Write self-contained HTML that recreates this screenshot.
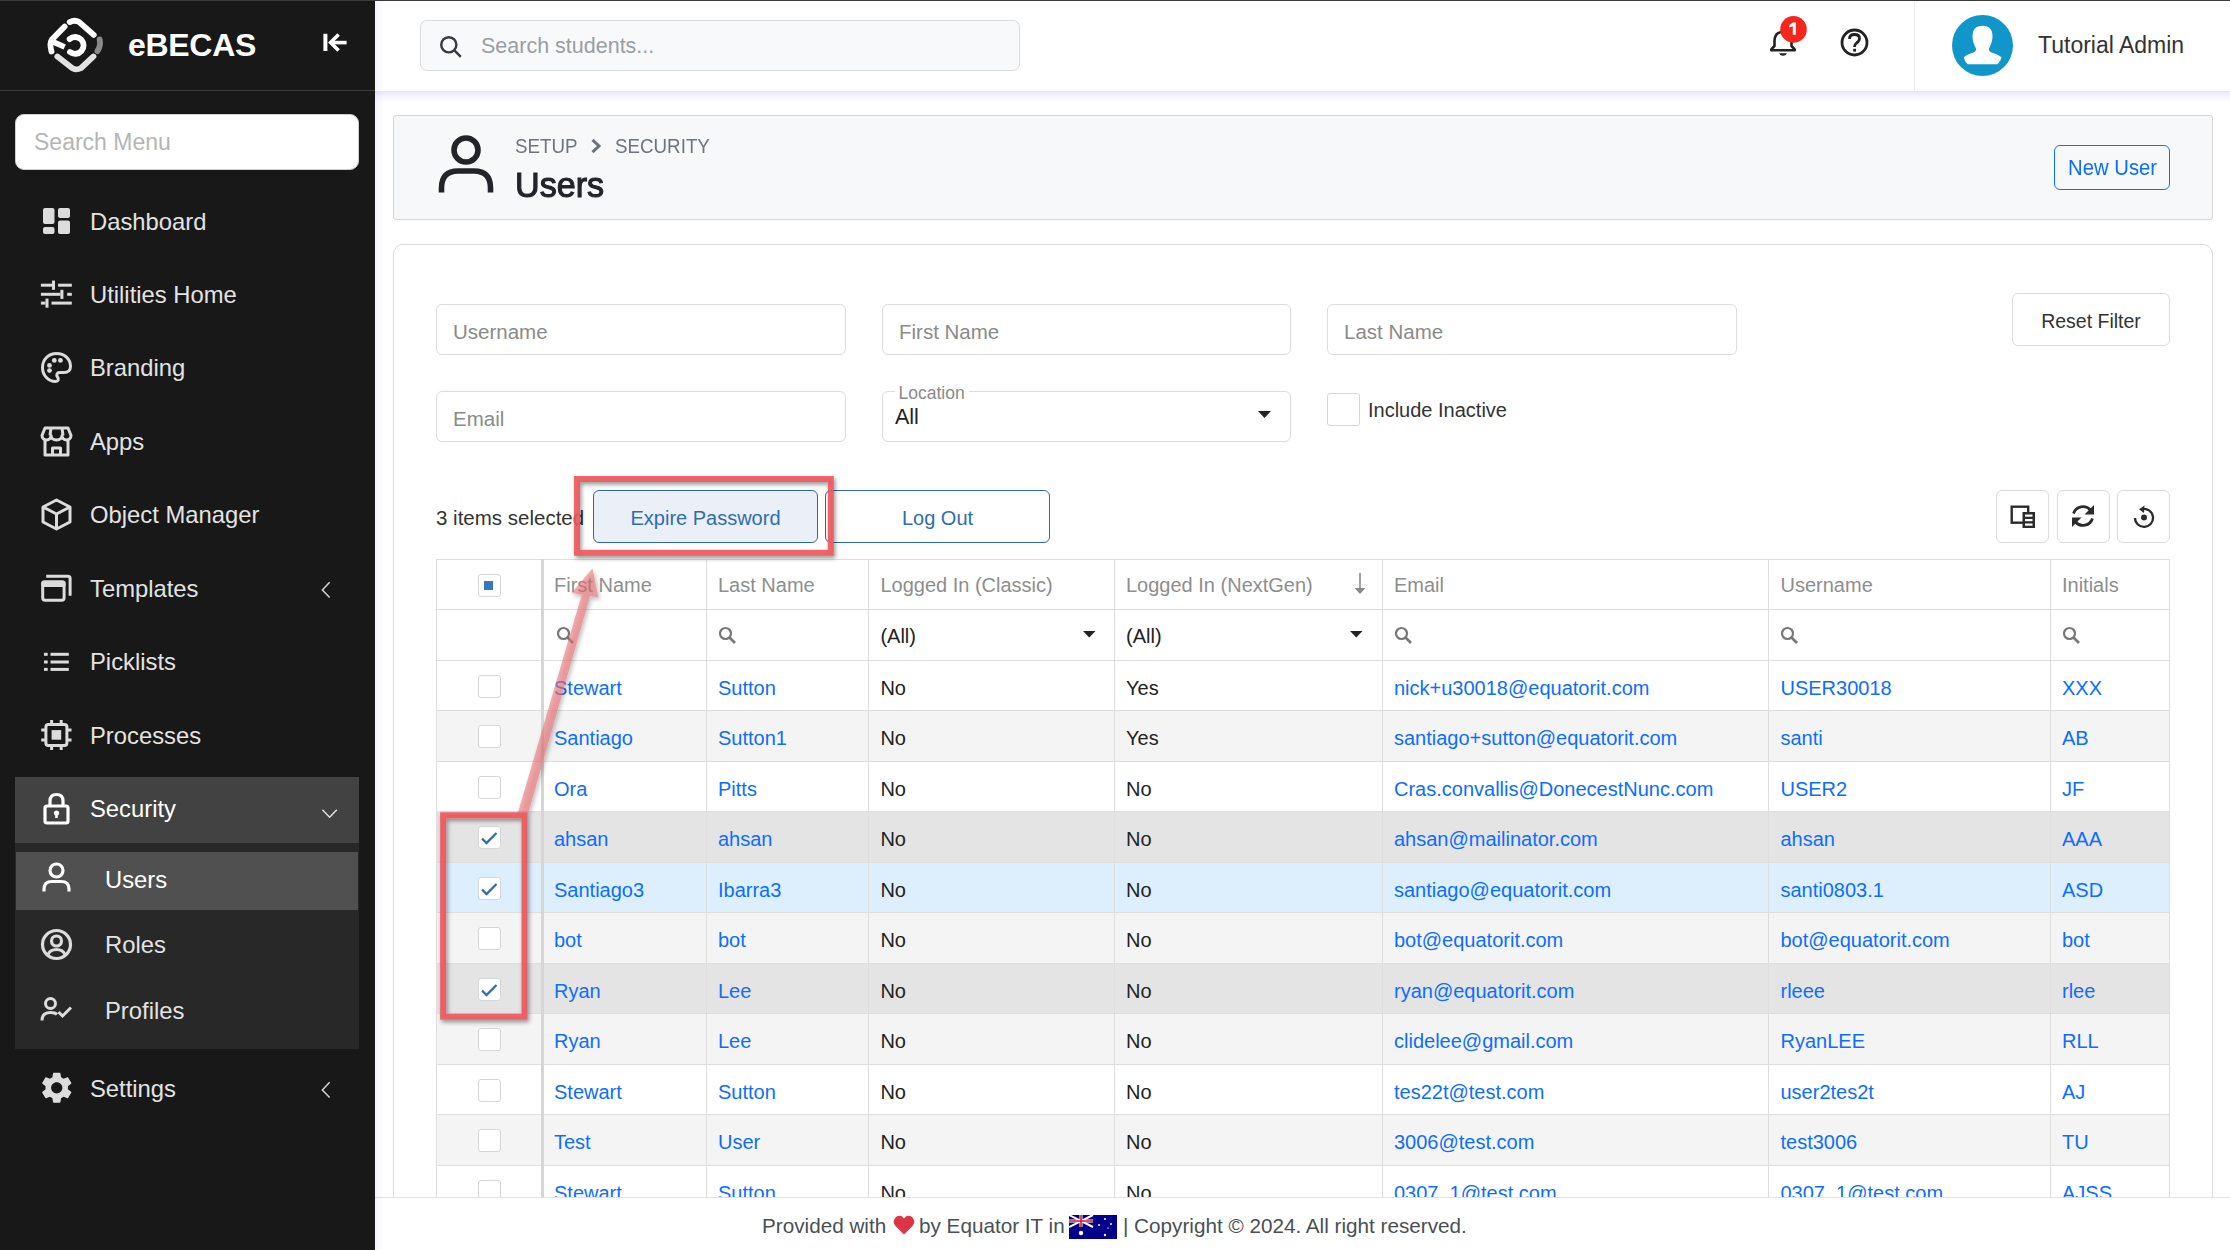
<!DOCTYPE html>
<html><head><meta charset="utf-8">
<style>
*{box-sizing:border-box;margin:0;padding:0}
html,body{width:2230px;height:1250px;overflow:hidden;background:#fff;font-family:"Liberation Sans",sans-serif}
.a{position:absolute}
#topline{left:0;top:0;width:2230px;height:1px;background:#3a3a3a;z-index:50}
#sb{left:0;top:0;width:375px;height:1250px;background:#181818}
#sb .sep{left:0;top:90px;width:375px;height:1px;background:#3c3c3c}
#sb .brand{left:128px;top:24px;font-size:32px;font-weight:bold;color:#fff;letter-spacing:-0.3px;line-height:42px}
#sb .smenu{left:15px;top:114px;width:344px;height:56px;background:#fff;border:1px solid #cfcfcf;border-radius:9px;color:#b5b5b5;font-size:23px;line-height:54px;padding-left:18px}
.mi{left:0;width:375px;height:40px;color:#e3e3e3;font-size:23.8px;line-height:40px}
.mi span{position:absolute;left:90px;top:1px}
.mi svg{position:absolute}
#sec{left:15px;top:777px;width:344px;height:66px;background:#424242}
#sub{left:15px;top:843px;width:344px;height:206px;background:#282828}
#subact{left:16px;top:852px;width:342px;height:58px;background:#505050}
#top{left:375px;top:1px;width:1855px;height:90px;background:#fff}
#topsh{left:375px;top:91px;width:1855px;height:12px;background:linear-gradient(rgba(105,95,225,0.17),rgba(105,95,225,0.06) 45%,rgba(105,95,225,0))}
#leftsh{left:375px;top:0;width:9px;height:1250px;background:linear-gradient(90deg,rgba(105,95,225,0.07),rgba(105,95,225,0))}
#search{left:420px;top:20px;width:600px;height:51px;background:#f8f9fa;border:1px solid #d9dadb;border-radius:7px;font-size:21.5px;color:#9a9ea3;line-height:50px;padding-left:60px}
#vdiv{left:1914px;top:1px;width:1px;height:90px;background:#ececec}
#admin{left:2038px;top:26px;font-size:23px;color:#333;line-height:38px}
#hdr{left:393px;top:115px;width:1820px;height:105px;background:#f7f8fa;border:1px solid #d6d6d6;border-radius:3px}
#crumb{left:514.5px;top:133.5px;font-size:20.3px;color:#6c757d;line-height:24px;transform:scaleX(0.925);transform-origin:0 0}
#title{left:514.5px;top:163px;font-size:35px;color:#212529;line-height:44px;-webkit-text-stroke:1.1px #212529;transform:scaleX(0.975);transform-origin:0 0}
#newuser{left:2054px;top:145px;width:116px;height:45px;border:1.5px solid #0d6efd;border-radius:6px;color:#0d6efd;font-size:20.5px;line-height:44px;text-align:center;background:transparent}
#card{left:393px;top:244px;width:1820px;height:1100px;border:1px solid #dcdcdc;border-radius:10px;background:#fff}
.inp{height:51px;border:1px solid #dcdcdc;border-radius:6px;background:#fff;font-size:20.5px;color:#8a8a8a;line-height:53px;padding-left:16px}
.btn{border:1px solid #dcdcdc;border-radius:6px;background:#fff;text-align:center}
#tbl{left:436px;top:559px;width:1734px}
.hline{height:1px;background:#dcdcdc}
.vline{width:1px;background:#dcdcdc}
.cell{font-size:20px;line-height:50px;white-space:nowrap}
.lnk{color:#0d6efd}
.blk{color:#222}
.cb{width:23px;height:23px;border:1px solid #d6d6d6;border-radius:3px;background:#fff}
#footer{left:375px;top:1197px;width:1855px;height:53px;background:#fff;border-top:1px solid #e2e2e2}
</style></head><body>
<div id="topline" class="a"></div>
<!-- SIDEBAR -->
<div id="sb" class="a">
  <div class="sep a"></div>
  <svg class="a" style="left:40px;top:10px" width="70" height="70" viewBox="0 0 1250 1250">
    <g fill="none" stroke-linecap="round" stroke-width="104">
      <path d="M530 215 Q620 170 700 215 L960 445" stroke="#fff"/>
      <path d="M440 295 L215 525 Q165 590 205 740" stroke="#fff"/>
      <path d="M225 565 L440 662" stroke="#fff" stroke-linecap="butt" stroke-width="100"/>
      <path d="M529.6 518.8 A150 150 0 1 1 535.7 750.2" stroke="#fff"/>
      <path d="M310 830 L580 1040 Q650 1080 730 1040 L955 830" stroke="#e2e2e2"/>
      <path d="M1065 525 Q1090 640 1025 735" stroke="#8a8a8a"/>
    </g>
  </svg>
  <div class="brand a">eBECAS</div>
  <svg class="a" style="left:322px;top:32px" width="26" height="22" viewBox="0 0 26 22"><rect x="1.4" y="1.8" width="4" height="17.2" fill="#fff"/><g stroke="#fff" stroke-width="3.6" fill="none"><path d="M8.5 10.6H24.6"/><path d="M16.6 2.6L8.6 10.6L16.6 18.6"/></g></svg>
  <div class="smenu a">Search Menu</div>
</div>
<div id="sec" class="a"></div>
<div id="sub" class="a"></div>
<div id="subact" class="a"></div>
<!-- menu items -->
<div class="mi a" style="top:201px"><svg style="left:42px;top:6px" width="29" height="28" viewBox="0 0 29 28"><g fill="#dcdcdc"><rect x="1" y="1" width="11.5" height="16" rx="2"/><rect x="16" y="1" width="12" height="10" rx="2"/><rect x="1" y="20" width="11.5" height="7" rx="2"/><rect x="16" y="13.5" width="12" height="13.5" rx="2"/></g></svg><span>Dashboard</span></div>
<div class="mi a" style="top:274px"><svg style="left:40px;top:6px" width="33" height="28" viewBox="0 0 33 28"><g fill="#dcdcdc"><rect x="0.9" y="3.7" width="11.1" height="3"/><rect x="18.1" y="3.7" width="13.7" height="3"/><rect x="12" y="0.6" width="3" height="9.2"/><rect x="0.9" y="12.8" width="19.5" height="3"/><rect x="27.2" y="12.8" width="4.6" height="3"/><rect x="20.4" y="9.8" width="3" height="9.1"/><rect x="0.9" y="21.6" width="4.6" height="3"/><rect x="11.5" y="21.6" width="20.3" height="3"/><rect x="5.5" y="18.6" width="3" height="9.1"/></g></svg><span>Utilities Home</span></div>
<div class="mi a" style="top:347px"><svg style="left:40px;top:4px" width="33" height="33" viewBox="0 0 33 33"><path d="M16.5 2.5C8.5 2.5 2.5 8.5 2.5 16.5C2.5 24.5 8.5 30.5 15.5 30.5C18.5 30.5 19 28 17.5 26C16 24 17 21.5 19.5 21.5H24C28 21.5 30.5 19 30.5 15.5C30.5 8 24.5 2.5 16.5 2.5Z" stroke="#dcdcdc" stroke-width="3" fill="none"/><g fill="#dcdcdc"><circle cx="9.5" cy="14.4" r="2.4"/><circle cx="14.3" cy="9.4" r="2.4"/><circle cx="20.4" cy="9.4" r="2.4"/><circle cx="9.5" cy="19.6" r="2.4"/></g></svg><span>Branding</span></div>
<div class="mi a" style="top:421px"><svg style="left:40px;top:5px" width="33" height="31" viewBox="0 0 33 31"><g stroke="#dcdcdc" stroke-width="3" fill="none" stroke-linejoin="round"><path d="M5 2H28L31 9.5C31 12 29 14 26.5 14C24 14 22 12 22 9.5C22 12 20 14 16.5 14C13 14 11 12 11 9.5C11 12 9 14 6.5 14C4 14 2 12 2 9.5Z"/><path d="M11 2L10 9.5M22 2L23 9.5"/><path d="M5 14V29H28V14"/><path d="M12.5 29V22H20.5V29"/></g></svg><span>Apps</span></div>
<div class="mi a" style="top:494px"><svg style="left:40px;top:4px" width="33" height="33" viewBox="0 0 33 33"><g stroke="#dcdcdc" stroke-width="3" fill="none" stroke-linejoin="round"><path d="M16.5 2L30 9V24L16.5 31L3 24V9Z"/><path d="M3 9L16.5 16L30 9M16.5 16V31"/></g></svg><span>Object Manager</span></div>
<div class="mi a" style="top:568px"><svg style="left:40px;top:5px" width="33" height="30" viewBox="0 0 33 30"><g stroke="#dcdcdc" stroke-width="3" fill="none" stroke-linejoin="round"><rect x="2.7" y="9.1" width="21.4" height="18.1" rx="2.5"/><path d="M6.2 3.3H28Q30.1 3.3 30.1 5.4V22.7"/></g><rect x="1.2" y="7.6" width="24.4" height="6.5" rx="2.5" fill="#dcdcdc"/></svg><span>Templates</span><svg style="left:318px;top:13px" width="14" height="18" viewBox="0 0 14 18"><path d="M11.6 1.3L4.4 9L11.6 16.4" stroke="#d4d4d4" stroke-width="1.5" fill="none"/></svg></div>
<div class="mi a" style="top:641px"><svg style="left:43px;top:9px" width="30" height="24" viewBox="0 0 30 24"><g fill="#dcdcdc"><rect x="1" y="2.8" width="3.7" height="3"/><rect x="1" y="10.5" width="3.7" height="3"/><rect x="1" y="17.9" width="3.7" height="3"/><rect x="7.5" y="2.8" width="18.3" height="3"/><rect x="7.5" y="10.5" width="18.3" height="3"/><rect x="7.5" y="17.9" width="18.3" height="3"/></g></svg><span>Picklists</span></div>
<div class="mi a" style="top:715px"><svg style="left:40px;top:4px" width="33" height="33" viewBox="0 0 33 33"><rect x="5.9" y="5.4" width="21" height="21" rx="2.5" stroke="#dcdcdc" stroke-width="3" fill="none"/><rect x="11.6" y="11.1" width="9.6" height="9.6" fill="#dcdcdc"/><g stroke="#dcdcdc" stroke-width="3"><path d="M11.6 1V5M21.2 1V5M11.6 27V31M21.2 27V31M1.2 11H5M1.2 21H5M27.5 11H31.5M27.5 21H31.5"/></g></svg><span>Processes</span></div>
<div class="mi a" style="top:788px;color:#fff"><svg style="left:42px;top:4px" width="29" height="33" viewBox="0 0 29 33"><g stroke="#fff" stroke-width="3.2" fill="none" stroke-linejoin="round"><rect x="3" y="14" width="23" height="17" rx="2"/><path d="M8 14V9Q8 2.5 14.5 2.5Q21 2.5 21 9V14"/></g><circle cx="14.5" cy="21" r="2.6" fill="#fff"/><rect x="13.2" y="21" width="2.6" height="5" fill="#fff"/></svg><span>Security</span><svg style="left:319px;top:16px" width="20" height="14" viewBox="0 0 20 14"><path d="M3.4 5.7L10.6 13.2L17.8 5.7" stroke="#e0e0e0" stroke-width="1.5" fill="none"/></svg></div>
<div class="mi a" style="top:859px;color:#fff"><svg style="left:42px;top:3px" width="29" height="31" viewBox="0 0 29 31"><g stroke="#fff" stroke-width="3.2" fill="none"><circle cx="14.5" cy="8.5" r="6.5"/><path d="M2 29.5V27Q2 19.5 10 19.5H19Q27 19.5 27 27V29.5"/></g></svg><span style="left:105px">Users</span></div>
<div class="mi a" style="top:924px"><svg style="left:40px;top:4px" width="33" height="33" viewBox="0 0 33 33"><g stroke="#dcdcdc" stroke-width="3.2" fill="none"><circle cx="16.5" cy="16.5" r="14"/><circle cx="16.5" cy="13" r="5"/><path d="M8 26.5Q10 21.5 16.5 21.5Q23 21.5 25 26.5"/></g></svg><span style="left:105px">Roles</span></div>
<div class="mi a" style="top:990px"><svg style="left:40px;top:7px" width="33" height="25" viewBox="0 0 33 25"><g stroke="#dcdcdc" stroke-width="3" fill="none"><circle cx="10.5" cy="6.5" r="5"/><path d="M2 23.5Q2 15.5 10.5 15.5Q15 15.5 17 17.5"/><path d="M18.5 15L22.5 19L31 10.5"/></g></svg><span style="left:105px">Profiles</span></div>
<div class="mi a" style="top:1068px"><svg style="left:37.75px;top:1.45px" width="37.5" height="37.5" viewBox="0 0 24 24"><path fill="#dcdcdc" d="M19.14 12.94c.04-.3.06-.61.06-.94 0-.32-.02-.64-.07-.94l2.03-1.58a.49.49 0 0 0 .12-.61l-1.92-3.32a.488.488 0 0 0-.59-.22l-2.39.96c-.5-.38-1.03-.7-1.62-.94l-.36-2.54a.484.484 0 0 0-.48-.41h-3.84c-.24 0-.43.17-.47.41l-.36 2.54c-.59.24-1.13.57-1.62.94l-2.39-.96c-.22-.08-.47 0-.59.22L2.74 8.87c-.12.21-.08.47.12.61l2.03 1.58c-.05.3-.09.63-.09.94s.02.64.07.94l-2.03 1.58a.49.49 0 0 0-.12.61l1.92 3.32c.12.22.37.29.59.22l2.39-.96c.5.38 1.03.7 1.62.94l.36 2.54c.05.24.24.41.48.41h3.84c.24 0 .44-.17.47-.41l.36-2.54c.59-.24 1.13-.56 1.62-.94l2.39.96c.22.08.47 0 .59-.22l1.92-3.32c.12-.22.07-.47-.12-.61l-2.01-1.58zM12 15.6c-1.98 0-3.6-1.62-3.6-3.6s1.62-3.6 3.6-3.6 3.6 1.62 3.6 3.6-1.62 3.6-3.6 3.6z"/></svg><span>Settings</span><svg style="left:318px;top:13px" width="14" height="18" viewBox="0 0 14 18"><path d="M11.6 1.3L4.4 9L11.6 16.4" stroke="#d4d4d4" stroke-width="1.5" fill="none"/></svg></div>

<!-- TOPBAR -->
<div id="top" class="a"></div><div id="topsh" class="a"></div>
<div id="search" class="a">Search students...</div>
<svg class="a" style="left:439px;top:35px" width="24" height="24" viewBox="0 0 24 24"><g stroke="#343a40" stroke-width="2.4" fill="none"><circle cx="9.8" cy="9.8" r="7.6"/><path d="M15.2 15.2L21.8 21.8"/></g></svg>
<svg class="a" style="left:1768px;top:14px" width="34" height="46" viewBox="0 0 34 46"><path d="M15 18Q6.5 18 6.5 27V32L3.3 35.3V36.3H26.7V35.3L23.5 32V27Q23.5 18 15 18Z" stroke="#222" stroke-width="2.6" fill="none" stroke-linejoin="round"/><path d="M11 39.3H19Q17.8 41.8 15 41.8Q12.2 41.8 11 39.3Z" fill="#222"/></svg>
<svg class="a" style="left:1780px;top:16px" width="27" height="27" viewBox="0 0 27 27"><circle cx="13.5" cy="13.4" r="13.3" fill="#f3271b"/><path d="M12.8 6.6H15.8V18.8H12.8V10.2L9.3 11.6V9.3Z" fill="#fff"/></svg>
<svg class="a" style="left:1839px;top:27px" width="31" height="31" viewBox="0 0 31 31"><circle cx="15.5" cy="15.5" r="12.5" stroke="#222" stroke-width="2.8" fill="none"/><path d="M10.5 12Q10.5 7.5 15.5 7.5Q20.5 7.5 20.5 11.5Q20.5 14 17.5 16Q15.5 17.5 15.5 20" stroke="#222" stroke-width="2.8" fill="none"/><rect x="14.2" y="21.8" width="2.8" height="2.8" fill="#222"/></svg>
<div id="vdiv" class="a"></div>
<svg class="a" style="left:1952px;top:15px" width="61" height="61" viewBox="0 0 61 61"><circle cx="30.5" cy="30.5" r="30.5" fill="#1096c8"/><path d="M30.5 10.7Q40.5 10.7 40.5 21.5Q40.5 27 37 33.5Q36.5 36 39.5 37.5Q47.5 40 49.5 42.5Q48.5 46.5 45.5 49.2H15.5Q12.5 46.5 11.8 42.5Q13.5 40 21.5 37.5Q24.5 36 24 33.5Q20.5 27 20.5 21.5Q20.5 10.7 30.5 10.7Z" fill="#fff"/></svg>
<div id="admin" class="a">Tutorial Admin</div>

<!-- HEADER CARD -->
<div id="hdr" class="a"></div>
<svg class="a" style="left:436px;top:133px" width="60" height="62" viewBox="0 0 60 62"><g stroke="#212529" stroke-width="5.6" fill="none"><circle cx="30" cy="17" r="12"/><path d="M5.5 59.5V55Q5.5 38 22 38H38Q54.5 38 54.5 55V59.5"/></g></svg>
<div id="crumb" class="a">SETUP</div><svg class="a" style="left:590px;top:138px" width="12" height="16" viewBox="0 0 12 16"><path d="M2.5 1.8L9 8L2.5 14.2" stroke="#6c757d" stroke-width="3" fill="none"/></svg><div class="a" style="left:614.5px;top:133.5px;font-size:20.3px;color:#6c757d;line-height:24px;transform:scaleX(0.925);transform-origin:0 0">SECURITY</div>
<div id="title" class="a">Users</div>
<div id="newuser" class="a"></div><div class="a" style="left:2068px;top:155px;font-size:22.2px;line-height:26px;color:#0d6efd;transform:scaleX(0.915);transform-origin:0 0;white-space:nowrap">New User</div>

<!-- MAIN CARD -->
<div id="card" class="a"></div>
<div class="inp a" style="left:436px;top:304px;width:410px">Username</div>
<div class="inp a" style="left:882px;top:304px;width:409px">First Name</div>
<div class="inp a" style="left:1327px;top:304px;width:410px">Last Name</div>
<div class="btn a" style="left:2012px;top:293px;width:158px;height:53px;font-size:19.5px;color:#333;line-height:55px">Reset Filter</div>
<div class="inp a" style="left:436px;top:391px;width:410px">Email</div>
<div class="inp a" style="left:882px;top:391px;width:409px"></div>
<div class="a" style="left:895px;top:382px;font-size:17.5px;color:#8a8a8a;line-height:22px;background:#fff;padding:0 4px 0 3.5px">Location</div>
<div class="a" style="left:895px;top:403px;font-size:21.5px;color:#222;line-height:28px">All</div>
<svg class="a" style="left:1258px;top:411px" width="14" height="8" viewBox="0 0 14 8"><path d="M0 0H13L6.5 7Z" fill="#222"/></svg>
<div class="cb a" style="left:1327px;top:393px;width:33px;height:33px;border-color:#d6d6d6"></div>
<div class="a" style="left:1368px;top:396px;font-size:20px;color:#333;line-height:28px">Include Inactive</div>

<div class="a" style="left:436px;top:504px;font-size:20.5px;color:#333;line-height:27px">3 items selected</div>
<div class="a" style="left:593px;top:490px;width:225px;height:53px;border:1px solid #2c6aa8;border-radius:6px;background:#ebeff7;color:#2f6db0;font-size:20px;line-height:55px;text-align:center">Expire Password</div>
<div class="a" style="left:825px;top:490px;width:225px;height:53px;border:1px solid #2c6aa8;border-radius:6px;background:#fff;color:#2f6db0;font-size:20px;line-height:55px;text-align:center">Log Out</div>
<div class="btn a" style="left:1996px;top:490px;width:53px;height:53px"></div>
<div class="btn a" style="left:2057px;top:490px;width:53px;height:53px"></div>
<div class="btn a" style="left:2117px;top:490px;width:53px;height:53px"></div>

<!-- TABLE -->
<!--TBL-->
<div class="a" style="left:436px;top:710.8px;width:1734px;height:50.5px;background:#f4f4f4"></div>
<div class="a" style="left:436px;top:811.8px;width:1734px;height:50.5px;background:#e4e4e4"></div>
<div class="a" style="left:436px;top:862.3px;width:1734px;height:50.5px;background:#ddeefd"></div>
<div class="a" style="left:436px;top:912.8px;width:1734px;height:50.5px;background:#f4f4f4"></div>
<div class="a" style="left:436px;top:963.3px;width:1734px;height:50.5px;background:#e4e4e4"></div>
<div class="a" style="left:436px;top:1013.8px;width:1734px;height:50.5px;background:#f4f4f4"></div>
<div class="a" style="left:436px;top:1114.8px;width:1734px;height:50.5px;background:#f4f4f4"></div>
<div class="a" style="left:436px;top:559px;width:1734px;height:1px;background:#dedede"></div>
<div class="a" style="left:436px;top:609.0px;width:1734px;height:1px;background:#dedede"></div>
<div class="a" style="left:436px;top:659.8px;width:1734px;height:1px;background:#dedede"></div>
<div class="a" style="left:436px;top:710.3px;width:1734px;height:1px;background:#dedede"></div>
<div class="a" style="left:436px;top:760.8px;width:1734px;height:1px;background:#dedede"></div>
<div class="a" style="left:436px;top:811.3px;width:1734px;height:1px;background:#dedede"></div>
<div class="a" style="left:436px;top:861.8px;width:1734px;height:1px;background:#dedede"></div>
<div class="a" style="left:436px;top:912.3px;width:1734px;height:1px;background:#dedede"></div>
<div class="a" style="left:436px;top:962.8px;width:1734px;height:1px;background:#dedede"></div>
<div class="a" style="left:436px;top:1013.3px;width:1734px;height:1px;background:#dedede"></div>
<div class="a" style="left:436px;top:1063.8px;width:1734px;height:1px;background:#dedede"></div>
<div class="a" style="left:436px;top:1114.3px;width:1734px;height:1px;background:#dedede"></div>
<div class="a" style="left:436px;top:1164.8px;width:1734px;height:1px;background:#dedede"></div>
<div class="a" style="left:435.5px;top:559px;width:1px;height:638px;background:#dedede"></div>
<div class="a" style="left:541px;top:559px;width:3px;height:638px;background:#d6d6d6"></div>
<div class="a" style="left:705.8px;top:559px;width:1px;height:638px;background:#dedede"></div>
<div class="a" style="left:868.0px;top:559px;width:1px;height:638px;background:#dedede"></div>
<div class="a" style="left:1113.9px;top:559px;width:1px;height:638px;background:#dedede"></div>
<div class="a" style="left:1381.8px;top:559px;width:1px;height:638px;background:#dedede"></div>
<div class="a" style="left:1768.1px;top:559px;width:1px;height:638px;background:#dedede"></div>
<div class="a" style="left:2050.0px;top:559px;width:1px;height:638px;background:#dedede"></div>
<div class="a" style="left:2169.0px;top:559px;width:1px;height:638px;background:#dedede"></div>
<div class="a cell" style="left:554px;top:560px;color:#8e8e8e">First Name</div>
<div class="a cell" style="left:718px;top:560px;color:#8e8e8e">Last Name</div>
<div class="a cell" style="left:880.4px;top:560px;color:#8e8e8e">Logged In (Classic)</div>
<div class="a cell" style="left:1126px;top:560px;color:#8e8e8e">Logged In (NextGen)</div>
<div class="a cell" style="left:1394px;top:560px;color:#8e8e8e">Email</div>
<div class="a cell" style="left:1780.5px;top:560px;color:#8e8e8e">Username</div>
<div class="a cell" style="left:2062px;top:560px;color:#8e8e8e">Initials</div>
<div class="a cb" style="left:477.5px;top:573.5px"></div>
<div class="a" style="left:484px;top:581px;width:9px;height:9px;background:#337ab7"></div>
<svg class="a" style="left:1353px;top:572px" width="14" height="23" viewBox="0 0 14 23"><path d="M7 1V17" stroke="#8a8a8a" stroke-width="1.6"/><path d="M1.5 16H12.5L7 22Z" fill="#8a8a8a"/></svg>
<svg class="a" style="left:555.5px;top:626px" width="19" height="19" viewBox="0 0 19 19"><circle cx="7.5" cy="7.5" r="5.5" stroke="#777" stroke-width="2.2" fill="none"/><path d="M11.5 11.5L17 17" stroke="#777" stroke-width="2.6"/></svg>
<svg class="a" style="left:717.5px;top:626px" width="19" height="19" viewBox="0 0 19 19"><circle cx="7.5" cy="7.5" r="5.5" stroke="#777" stroke-width="2.2" fill="none"/><path d="M11.5 11.5L17 17" stroke="#777" stroke-width="2.6"/></svg>
<svg class="a" style="left:1393.5px;top:626px" width="19" height="19" viewBox="0 0 19 19"><circle cx="7.5" cy="7.5" r="5.5" stroke="#777" stroke-width="2.2" fill="none"/><path d="M11.5 11.5L17 17" stroke="#777" stroke-width="2.6"/></svg>
<svg class="a" style="left:1779.5px;top:626px" width="19" height="19" viewBox="0 0 19 19"><circle cx="7.5" cy="7.5" r="5.5" stroke="#777" stroke-width="2.2" fill="none"/><path d="M11.5 11.5L17 17" stroke="#777" stroke-width="2.6"/></svg>
<svg class="a" style="left:2061.5px;top:626px" width="19" height="19" viewBox="0 0 19 19"><circle cx="7.5" cy="7.5" r="5.5" stroke="#777" stroke-width="2.2" fill="none"/><path d="M11.5 11.5L17 17" stroke="#777" stroke-width="2.6"/></svg>
<div class="a cell blk" style="left:880.4px;top:610.5px">(All)</div>
<svg class="a" style="left:1083px;top:631px" width="13" height="7" viewBox="0 0 13 7"><path d="M0 0H12.5L6.25 6.5Z" fill="#222"/></svg>
<div class="a cell blk" style="left:1126px;top:610.5px">(All)</div>
<svg class="a" style="left:1350px;top:631px" width="13" height="7" viewBox="0 0 13 7"><path d="M0 0H12.5L6.25 6.5Z" fill="#222"/></svg>
<div class="a cell lnk" style="left:554px;top:662.8px">Stewart</div>
<div class="a cell lnk" style="left:718px;top:662.8px">Sutton</div>
<div class="a cell blk" style="left:880.4px;top:662.8px">No</div>
<div class="a cell blk" style="left:1126px;top:662.8px">Yes</div>
<div class="a cell lnk" style="left:1394px;top:662.8px">nick+u30018@equatorit.com</div>
<div class="a cell lnk" style="left:1780.5px;top:662.8px">USER30018</div>
<div class="a cell lnk" style="left:2062px;top:662.8px">XXX</div>
<div class="a cb" style="left:477.5px;top:675px;width:23px;height:23px"></div>
<div class="a cell lnk" style="left:554px;top:713.3px">Santiago</div>
<div class="a cell lnk" style="left:718px;top:713.3px">Sutton1</div>
<div class="a cell blk" style="left:880.4px;top:713.3px">No</div>
<div class="a cell blk" style="left:1126px;top:713.3px">Yes</div>
<div class="a cell lnk" style="left:1394px;top:713.3px">santiago+sutton@equatorit.com</div>
<div class="a cell lnk" style="left:1780.5px;top:713.3px">santi</div>
<div class="a cell lnk" style="left:2062px;top:713.3px">AB</div>
<div class="a cb" style="left:477.5px;top:725px;width:23px;height:23px"></div>
<div class="a cell lnk" style="left:554px;top:763.8px">Ora</div>
<div class="a cell lnk" style="left:718px;top:763.8px">Pitts</div>
<div class="a cell blk" style="left:880.4px;top:763.8px">No</div>
<div class="a cell blk" style="left:1126px;top:763.8px">No</div>
<div class="a cell lnk" style="left:1394px;top:763.8px">Cras.convallis@DonecestNunc.com</div>
<div class="a cell lnk" style="left:1780.5px;top:763.8px">USER2</div>
<div class="a cell lnk" style="left:2062px;top:763.8px">JF</div>
<div class="a cb" style="left:477.5px;top:776px;width:23px;height:23px"></div>
<div class="a cell lnk" style="left:554px;top:814.3px">ahsan</div>
<div class="a cell lnk" style="left:718px;top:814.3px">ahsan</div>
<div class="a cell blk" style="left:880.4px;top:814.3px">No</div>
<div class="a cell blk" style="left:1126px;top:814.3px">No</div>
<div class="a cell lnk" style="left:1394px;top:814.3px">ahsan@mailinator.com</div>
<div class="a cell lnk" style="left:1780.5px;top:814.3px">ahsan</div>
<div class="a cell lnk" style="left:2062px;top:814.3px">AAA</div>
<div class="a cb" style="left:477.5px;top:826px;width:23px;height:23px"></div>
<svg class="a" style="left:478px;top:827.0px" width="23" height="23" viewBox="0 0 23 23"><path d="M4 11.5L8.5 16L18.5 6" stroke="#2d6fb0" stroke-width="2.3" fill="none"/></svg>
<div class="a cell lnk" style="left:554px;top:864.8px">Santiago3</div>
<div class="a cell lnk" style="left:718px;top:864.8px">Ibarra3</div>
<div class="a cell blk" style="left:880.4px;top:864.8px">No</div>
<div class="a cell blk" style="left:1126px;top:864.8px">No</div>
<div class="a cell lnk" style="left:1394px;top:864.8px">santiago@equatorit.com</div>
<div class="a cell lnk" style="left:1780.5px;top:864.8px">santi0803.1</div>
<div class="a cell lnk" style="left:2062px;top:864.8px">ASD</div>
<div class="a cb" style="left:477.5px;top:877px;width:23px;height:23px"></div>
<svg class="a" style="left:478px;top:877.5px" width="23" height="23" viewBox="0 0 23 23"><path d="M4 11.5L8.5 16L18.5 6" stroke="#2d6fb0" stroke-width="2.3" fill="none"/></svg>
<div class="a cell lnk" style="left:554px;top:915.3px">bot</div>
<div class="a cell lnk" style="left:718px;top:915.3px">bot</div>
<div class="a cell blk" style="left:880.4px;top:915.3px">No</div>
<div class="a cell blk" style="left:1126px;top:915.3px">No</div>
<div class="a cell lnk" style="left:1394px;top:915.3px">bot@equatorit.com</div>
<div class="a cell lnk" style="left:1780.5px;top:915.3px">bot@equatorit.com</div>
<div class="a cell lnk" style="left:2062px;top:915.3px">bot</div>
<div class="a cb" style="left:477.5px;top:927px;width:23px;height:23px"></div>
<div class="a cell lnk" style="left:554px;top:965.8px">Ryan</div>
<div class="a cell lnk" style="left:718px;top:965.8px">Lee</div>
<div class="a cell blk" style="left:880.4px;top:965.8px">No</div>
<div class="a cell blk" style="left:1126px;top:965.8px">No</div>
<div class="a cell lnk" style="left:1394px;top:965.8px">ryan@equatorit.com</div>
<div class="a cell lnk" style="left:1780.5px;top:965.8px">rleee</div>
<div class="a cell lnk" style="left:2062px;top:965.8px">rlee</div>
<div class="a cb" style="left:477.5px;top:978px;width:23px;height:23px"></div>
<svg class="a" style="left:478px;top:978.5px" width="23" height="23" viewBox="0 0 23 23"><path d="M4 11.5L8.5 16L18.5 6" stroke="#2d6fb0" stroke-width="2.3" fill="none"/></svg>
<div class="a cell lnk" style="left:554px;top:1016.3px">Ryan</div>
<div class="a cell lnk" style="left:718px;top:1016.3px">Lee</div>
<div class="a cell blk" style="left:880.4px;top:1016.3px">No</div>
<div class="a cell blk" style="left:1126px;top:1016.3px">No</div>
<div class="a cell lnk" style="left:1394px;top:1016.3px">clidelee@gmail.com</div>
<div class="a cell lnk" style="left:1780.5px;top:1016.3px">RyanLEE</div>
<div class="a cell lnk" style="left:2062px;top:1016.3px">RLL</div>
<div class="a cb" style="left:477.5px;top:1028px;width:23px;height:23px"></div>
<div class="a cell lnk" style="left:554px;top:1066.8px">Stewart</div>
<div class="a cell lnk" style="left:718px;top:1066.8px">Sutton</div>
<div class="a cell blk" style="left:880.4px;top:1066.8px">No</div>
<div class="a cell blk" style="left:1126px;top:1066.8px">No</div>
<div class="a cell lnk" style="left:1394px;top:1066.8px">tes22t@test.com</div>
<div class="a cell lnk" style="left:1780.5px;top:1066.8px">user2tes2t</div>
<div class="a cell lnk" style="left:2062px;top:1066.8px">AJ</div>
<div class="a cb" style="left:477.5px;top:1079px;width:23px;height:23px"></div>
<div class="a cell lnk" style="left:554px;top:1117.3px">Test</div>
<div class="a cell lnk" style="left:718px;top:1117.3px">User</div>
<div class="a cell blk" style="left:880.4px;top:1117.3px">No</div>
<div class="a cell blk" style="left:1126px;top:1117.3px">No</div>
<div class="a cell lnk" style="left:1394px;top:1117.3px">3006@test.com</div>
<div class="a cell lnk" style="left:1780.5px;top:1117.3px">test3006</div>
<div class="a cell lnk" style="left:2062px;top:1117.3px">TU</div>
<div class="a cb" style="left:477.5px;top:1129px;width:23px;height:23px"></div>
<div class="a cell lnk" style="left:554px;top:1167.8px">Stewart</div>
<div class="a cell lnk" style="left:718px;top:1167.8px">Sutton</div>
<div class="a cell blk" style="left:880.4px;top:1167.8px">No</div>
<div class="a cell blk" style="left:1126px;top:1167.8px">No</div>
<div class="a cell lnk" style="left:1394px;top:1167.8px">0307_1@test.com</div>
<div class="a cell lnk" style="left:1780.5px;top:1167.8px">0307_1@test.com</div>
<div class="a cell lnk" style="left:2062px;top:1167.8px">AJSS</div>
<div class="a cb" style="left:477.5px;top:1180px;width:23px;height:23px"></div>

<!--/TBL-->

<!-- FOOTER -->
<div id="footer" class="a"></div>
<div class="a" style="left:762px;top:1213px;font-size:20.7px;color:#4a4f55;line-height:26px;white-space:nowrap">Provided with</div>
<svg class="a" style="left:893px;top:1215px" width="22" height="20" viewBox="0 0 22 20"><path d="M11 19.5L2.5 11Q-0.5 7.5 1.5 4Q3.5 0.5 7 0.8Q9.5 1 11 3.5Q12.5 1 15 0.8Q18.5 0.5 20.5 4Q22.5 7.5 19.5 11Z" fill="#dc3545"/></svg>
<div class="a" style="left:919px;top:1213px;font-size:20.7px;color:#4a4f55;line-height:26px;white-space:nowrap">by Equator IT in</div>
<svg class="a" style="left:1069px;top:1215px" width="48" height="24" viewBox="0 0 48 24"><rect width="48" height="24" fill="#00008b"/><g stroke="#fff" stroke-width="3"><path d="M0 6H24M12 0V12"/><path d="M0 0L24 12M24 0L0 12" stroke-width="2"/></g><g stroke="#e8112d" stroke-width="1.6"><path d="M0 6H24M12 0V12"/></g><g fill="#fff"><circle cx="12" cy="18" r="2.2"/><circle cx="36" cy="4" r="1"/><circle cx="36" cy="20" r="1.2"/><circle cx="30" cy="10" r="1"/><circle cx="42" cy="9" r="1"/><circle cx="39" cy="13" r="0.7"/></g></svg>
<div class="a" style="left:1123px;top:1213px;font-size:20.7px;color:#4a4f55;line-height:26px;white-space:nowrap">| Copyright © 2024. All right reserved.</div>
<!-- toolbar icons -->
<svg class="a" style="left:2009px;top:504px" width="28" height="26" viewBox="0 0 28 26"><rect x="2.7" y="2.7" width="16.5" height="16" fill="none" stroke="#2b2b2b" stroke-width="2.4"/><rect x="13.5" y="8" width="12.5" height="16" fill="#2b2b2b"/><g fill="#fff"><rect x="16" y="10.5" width="7.5" height="2.2"/><rect x="16" y="15" width="7.5" height="2.2"/><rect x="16" y="19.5" width="7.5" height="2.2"/></g></svg>
<svg class="a" style="left:2070px;top:503px" width="26" height="26" viewBox="0 0 26 26"><g fill="none" stroke="#2b2b2b" stroke-width="2.8"><path d="M3.5 10.5A10 10 0 0 1 20.5 7"/><path d="M22.5 15.5A10 10 0 0 1 5.5 19"/></g><path d="M24 2V11.5H14.5Z" fill="#2b2b2b"/><path d="M2 24V14.5H11.5Z" fill="#2b2b2b"/></svg>
<svg class="a" style="left:2131px;top:504px" width="26" height="26" viewBox="0 0 26 26"><path d="M4 14A9 9 0 1 0 11.5 5" fill="none" stroke="#2b2b2b" stroke-width="2.3"/><path d="M13.5 1.5L8 5.3L13 9Z" fill="#2b2b2b"/><circle cx="13" cy="13.5" r="3" fill="#2b2b2b"/></svg>
<div id="leftsh" class="a"></div>
<!-- ANNOTATIONS -->
<svg class="a" style="left:0;top:0;z-index:40" width="2230" height="1250" viewBox="0 0 2230 1250">
<defs><filter id="sh" x="-20%" y="-20%" width="140%" height="140%"><feDropShadow dx="1.5" dy="2.5" stdDeviation="2.2" flood-color="#000" flood-opacity="0.45"/></filter></defs>
<g filter="url(#sh)">
<path d="M571.5 593 L598.5 597.5 L592.5 568.5 Z M518 812.5 L528.5 812.5 L591 593 L582.5 592 Z" fill="rgba(236,110,116,0.56)"/>
</g>
<g filter="url(#sh)" fill="none" stroke="rgba(238,88,93,0.9)" stroke-width="6">
<rect x="577" y="479" width="253.8" height="73.8"/>
<rect x="443.1" y="815.3" width="81.4" height="201.4"/>
</g>
</svg>
</body></html>
